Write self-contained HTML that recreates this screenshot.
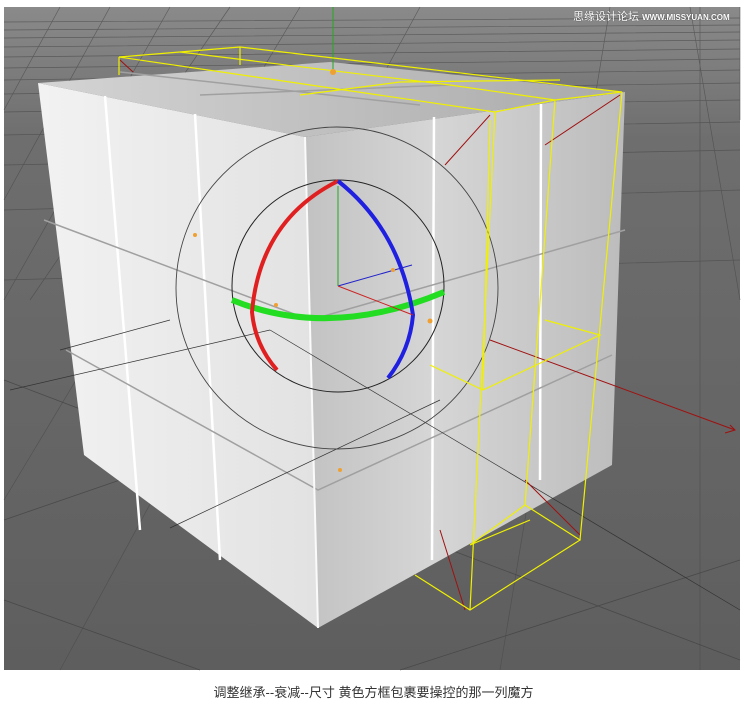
<!DOCTYPE html>
<html><head><meta charset="utf-8"><style>
html,body{margin:0;padding:0;background:#fff;width:747px;height:714px;overflow:hidden}
svg{position:absolute;left:0;top:0}
.cap{position:absolute;left:0;width:747px;top:682px;text-align:center;font:13px "Liberation Sans","Noto Sans CJK SC",sans-serif;color:#333}
.wm{position:absolute;left:573px;top:8px;font:11px "Liberation Sans","Noto Sans CJK SC",sans-serif;color:#fff;text-shadow:0 0 1px #333;white-space:nowrap}
.wm span{font-size:8px;font-weight:bold}
</style></head><body>
<svg width="747" height="714" viewBox="0 0 747 714">
<defs>
<linearGradient id="bg" x1="0" y1="0" x2="0" y2="1">
<stop offset="0" stop-color="#8a8a8a"/><stop offset="0.2" stop-color="#6e6e6e"/><stop offset="1" stop-color="#5e5e5e"/></linearGradient>
<linearGradient id="lf" x1="0" y1="0" x2="1" y2="0">
<stop offset="0" stop-color="#f2f2f2"/><stop offset="1" stop-color="#e2e2e2"/></linearGradient>
<linearGradient id="rf" x1="0" y1="0" x2="1" y2="0">
<stop offset="0" stop-color="#c2c2c2"/><stop offset="0.4" stop-color="#d6d6d6"/><stop offset="1" stop-color="#bcbcbc"/></linearGradient>
<linearGradient id="tf" x1="0" y1="0" x2="1" y2="0">
<stop offset="0" stop-color="#d4d4d4"/><stop offset="1" stop-color="#aaaaaa"/></linearGradient>
</defs>
<rect x="4" y="7" width="736" height="663" fill="url(#bg)"/>
<g stroke="#4a4a4a" stroke-width="0.7" fill="none" opacity="0.7">
<path d="M4 22L740 18M4 30L740 25M4 38L740 32M4 47L740 40M4 57L740 49M4 68L740 59M4 80L740 70M4 94L740 83M4 112L740 100M4 135L740 122M4 165L740 150M4 210L740 190M4 280L740 260"/>
<path d="M4 110L60 7M4 200L110 7M4 300L170 7M30 300L230 7M4 500L300 7M60 670L420 7M500 670L610 7M700 670L700 7M740 300L690 7M740 120L740 7"/>
</g>
<g stroke="#444" stroke-width="0.8" fill="none" opacity="0.8">
<path d="M4 380L740 660M4 600L200 670M400 670L740 560M4 520L120 480"/>
</g>
<!-- cube -->
<polygon points="38,83 305,137 318,628 84,455" fill="url(#lf)"/>
<polygon points="305,137 625,92 612,465 318,628" fill="url(#rf)"/>
<polygon points="38,83 330,62 625,92 305,137" fill="url(#tf)"/>
<g stroke="#fff" stroke-width="2.5" fill="none">
<path d="M105,96L140,530M195,114L220,560"/>
<path d="M434,117L432,560M541,104L540,480"/>
</g>
<g stroke="#a0a0a0" stroke-width="1.5" fill="none">
<path d="M44,220L310,320L625,230M66,350L318,490L612,355"/>
<path d="M120,72L420,105M200,95L450,85"/>
</g>
<path d="M305,137L318,628" stroke="#fafafa" stroke-width="2"/>
<!-- black lines -->
<g stroke="#333" stroke-width="0.7" fill="none">
<path d="M60,350L170,320M10,390L270,330M170,528L440,400"/>
<path d="M270,330L740,610"/>
</g>
<!-- gizmo -->
<circle cx="337" cy="288" r="161" fill="none" stroke="#444" stroke-width="0.9"/>
<circle cx="338" cy="286" r="106" fill="none" stroke="#222" stroke-width="1"/>
<path d="M232,300Q330,340 444,292" stroke="#22dd22" stroke-width="6" fill="none"/>
<path d="M338,181Q260,220 252,312Q255,345 277,370" stroke="#e02020" stroke-width="4" fill="none"/>
<path d="M338,181Q400,230 413,315Q410,350 388,378" stroke="#2020e0" stroke-width="4" fill="none"/>
<path d="M338,186V286" stroke="#2a2" stroke-width="1"/>
<path d="M338,286L412,265" stroke="#22c" stroke-width="1"/>
<path d="M338,286L413,315" stroke="#c22" stroke-width="1"/>
<path d="M333,7V70" stroke="#2a2" stroke-width="1"/>
<!-- red lines -->
<g stroke="#a01010" stroke-width="1" fill="none">
<path d="M120,60L133,72M490,115L445,165M620,95L545,145M490,340L735,430M730,425L735,430L725,433M440,530L465,610M525,480L580,535"/>
</g>
<!-- yellow wireframe -->
<g stroke="#f0f000" stroke-width="1.2" fill="none">
<path d="M119,57L240,47L622,92L555,100L495,112L119,57M119,57V75M240,47V65M495,112V115"/>
<path d="M180,52L450,85L555,100M300,95L400,82M400,82L560,80"/>
<path d="M495,112L470,610M555,100L525,505M622,92L580,540"/>
<path d="M415,575L470,610L580,540L525,505L470,545M470,545L530,520"/>
<path d="M430,365L483,390L600,335L545,320M483,390L490,120"/>
</g>
<g fill="#f0a030">
<circle cx="333" cy="72" r="3"/><circle cx="195" cy="235" r="2"/><circle cx="276" cy="305" r="2"/><circle cx="430" cy="321" r="2.5"/><circle cx="340" cy="470" r="2"/><circle cx="393" cy="270" r="2"/>
</g>
</svg>
<div class="wm">思缘设计论坛 <span>WWW.MISSYUAN.COM</span></div>
<div class="cap">调整继承--衰减--尺寸 黄色方框包裹要操控的那一列魔方</div>
</body></html>
